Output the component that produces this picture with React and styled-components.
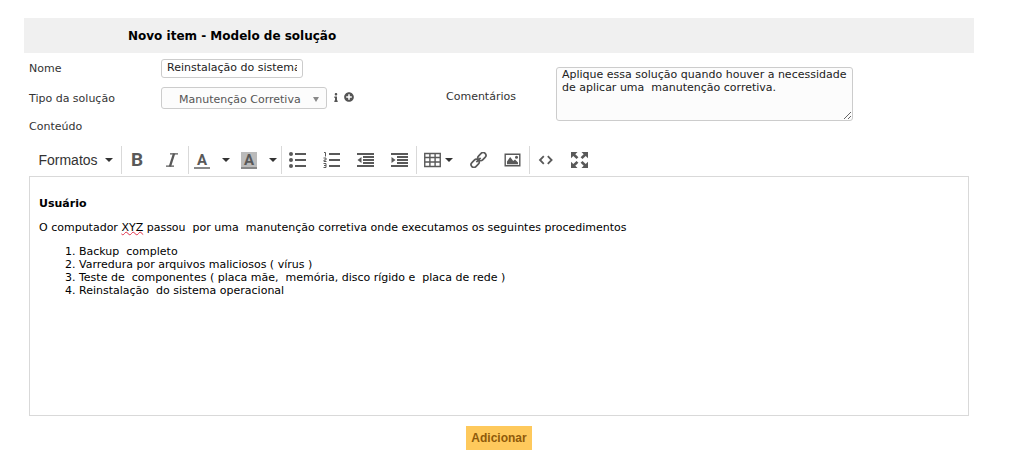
import React from "react";
import styled, { createGlobalStyle } from "styled-components";
import { FaInfo, FaPlusCircle } from "react-icons/fa";

const GlobalStyle = createGlobalStyle`
  *, *::before, *::after { box-sizing: border-box; }
  body {
    margin: 0;
    background: #fff;
    color: #222;
    font: 11px/13px "DejaVu Sans", Verdana, sans-serif;
  }
`;

const Page = styled.form`
  padding: 18px 43px 12px 24px;
`;

const Header = styled.h1`
  margin: 0;
  padding: 1px 104px 0;
  background: #f0f0f0;
  color: #000;
  font-size: 12px;
  line-height: 34px;
`;

const Fields = styled.div`
  display: grid;
  grid-template-columns: 132px 285px 110px 1fr;
  grid-template-rows: 30px 30px 26px;
  align-items: center;
  padding: 0 5px;
`;

const Label = styled.label`
  grid-column: 1;
  color: #333;
`;

const CommentLabel = styled(Label)`
  grid-column: 3;
  grid-row: 1 / span 3;
`;

const Control = styled.div`
  grid-column: 2;
  display: flex;
  align-items: center;
  gap: 4px;
`;

const TextInput = styled.input`
  width: 142px;
  height: 19px;
  padding: 0 5px 2px;
  border: 1px solid #ccc;
  border-radius: 3px;
  background: #fff;
  color: #222;
  font: inherit;
`;

const SelectBox = styled.div`
  position: relative;
  width: 166px;
  margin-right: 2px;

  svg {
    position: absolute;
    right: 8px;
    top: 10px;
    pointer-events: none;
  }
`;

const Select = styled.select`
  display: block;
  appearance: none;
  width: 100%;
  height: 22px;
  padding: 2px 17px 0;
  border: 1px solid #ccc;
  border-radius: 3px;
  background: #fcfcfc;
  color: #555;
  font: inherit;
`;

const IconButton = styled.button`
  display: flex;
  justify-content: center;
  width: ${(p) => p.$width}px;
  padding: 0 0 2px;
  border: 0;
  background: none;
  color: #555;
`;

const Comments = styled.textarea`
  grid-column: 4;
  grid-row: 1 / span 3;
  align-self: start;
  width: 297px;
  height: 54px;
  margin: 14px 0 0;
  padding: 0 5px;
  border: 1px solid #ccc;
  border-radius: 3px;
  background: #fcfcfc;
  color: #222;
  font: inherit;
  overflow: hidden;
`;

const Editor = styled.section`
  padding: 7px 5px 0;
`;

const Toolbar = styled.div`
  display: flex;
  height: 30px;
`;

const Group = styled.div`
  display: flex;
  height: 28px;
  margin-right: -1px;
  border-left: 1px solid ${(p) => (p.$first ? "transparent" : "#d9d9d9")};

  & > :first-child { margin-left: -1px; }
`;

const Tool = styled.button`
  display: flex;
  align-items: center;
  justify-content: center;
  gap: ${(p) => p.$gap || 0}px;
  width: ${(p) => p.$width || 34}px;
  padding: 0 2px 0 0;
  border: 0;
  background: none;
  color: #595959;
  font: 14px/20px "Liberation Sans", Arial, sans-serif;
`;

const FormatTool = styled(Tool)`
  padding: 0;
  color: #333;
`;

const BoldMark = styled.span`
  font: bold 19px/20px Roboto, sans-serif;
`;

const ColorMark = styled.span`
  width: 16px;
  height: 17px;
  border-bottom: 2px solid #888;
  background: ${(p) => (p.$filled ? "#bbb" : "transparent")};
  font: bold 15px/17px Roboto, sans-serif;
  text-align: center;
`;

const Content = styled.div`
  height: 240px;
  padding: 9px;
  border: 1px solid #d9d9d9;
  color: #000;
  white-space: pre-wrap;
  overflow: auto;

  p { margin: 11px 0; }
  ol { margin: 11px 0; padding-left: 40px; }
`;

const Misspelled = styled.span`
  text-decoration: underline wavy #e0304a 1px;
  text-underline-offset: 0;
  text-decoration-skip-ink: none;
`;

const Footer = styled.footer`
  display: flex;
  justify-content: center;
  padding-top: 10px;
`;

const Submit = styled.button`
  height: 24px;
  padding: 0 5px;
  border: 0;
  background: #fec95c;
  color: #8f5a0a;
  font: bold 12px/24px "Liberation Sans", Arial, sans-serif;
`;

const Caret = () => (
  <svg width="8" height="4" viewBox="0 0 8 4" fill="#333" aria-hidden="true">
    <path d="M0 0h8L4 4z" />
  </svg>
);

const Icon = ({ children }) => (
  <svg width="17" height="16" viewBox="0 0 17 16" fill="currentColor" aria-hidden="true">
    {children}
  </svg>
);

const ItalicIcon = () => (
  <Icon>
    <path d="M7 1.8h8M3 14.2h8" stroke="currentColor" strokeWidth="1.3" />
    <path d="M11.1 1.5L6.9 14.5" stroke="currentColor" strokeWidth="2.4" />
  </Icon>
);

const BulletsIcon = () => (
  <Icon>
    <circle cx="2" cy="2" r="2" />
    <circle cx="2" cy="8" r="2" />
    <circle cx="2" cy="14" r="2" />
    <path d="M6 1h11v2H6zM6 7h11v2H6zM6 13h11v2H6z" />
  </Icon>
);

const NumbersIcon = () => (
  <Icon>
    <path d="M6 1h11v2H6zM6 7h11v2H6zM6 13h11v2H6z" />
    <path
      d="M1 .5h1.5V4.5M.5 6h2.5v2H1v1.5h2.5M.5 11.5h2.5v4H.5M1 13.5h2"
      fill="none"
      stroke="currentColor"
    />
  </Icon>
);

const IndentIcon = ({ arrow }) => (
  <Icon>
    <path d="M0 1h17v2H0zM6 4h11v2H6zM6 7h11v2H6zM6 10h11v2H6zM0 13h17v2H0z" />
    <path d={arrow} />
  </Icon>
);

const TableIcon = () => (
  <Icon>
    <path
      d="M.75 1.5h15.5v13H.75zM.75 5.5h15.5M.75 10h15.5M5.9 1.5v13M11.1 1.5v13"
      fill="none"
      stroke="currentColor"
      strokeWidth="1.4"
    />
  </Icon>
);

const LinkIcon = () => (
  <Icon>
    <g fill="none" stroke="currentColor" strokeWidth="1.7" transform="rotate(-45 8.5 8)">
      <rect x="-.8" y="5.2" width="9" height="5.6" rx="2.8" />
      <rect x="8.8" y="5.2" width="9" height="5.6" rx="2.8" />
      <path d="M5.5 8h6" />
    </g>
  </Icon>
);

const ImageIcon = () => (
  <Icon>
    <path d="M1.2 2.2h14.6v11.6H1.2z" fill="none" stroke="currentColor" strokeWidth="1.4" />
    <path d="M3 12.2V9.5L6.2 5l3 4 1.8-1.6 3 3v1.8z" />
    <circle cx="12.5" cy="5.2" r="1.5" />
  </Icon>
);

const CodeIcon = () => (
  <Icon>
    <path d="M6.8 4.2L3 8l3.8 3.8M10.8 4.2L14.6 8l-3.8 3.8" fill="none" stroke="currentColor" strokeWidth="1.8" />
  </Icon>
);

const FullscreenIcon = () => (
  <Icon>
    <path d="M0 0h6.5L4.3 2.2 7.4 5.3 5.5 7.1 2.3 4 0 6.3zM17 0h-6.5l2.2 2.2-3.1 3.1 1.9 1.8L14.7 4 17 6.3zM0 16h6.5l-2.2-2.2 3.1-3.1-1.9-1.8L2.3 12 0 9.7zM17 16h-6.5l2.2-2.2-3.1-3.1 1.9-1.8 3.2 3.1L17 9.7z" />
  </Icon>
);

const ToolbarButton = ({ label, ...rest }) => (
  <Tool type="button" aria-label={label} {...rest} />
);

export default function App() {
  return (
    <>
      <GlobalStyle />
      <Page onSubmit={(e) => e.preventDefault()}>
        <Header>Novo item - Modelo de solução</Header>

        <Fields>
          <Label htmlFor="name">Nome</Label>
          <Control>
            <TextInput id="name" defaultValue="Reinstalação do sistema operacional" />
          </Control>

          <Label htmlFor="type">Tipo da solução</Label>
          <Control>
            <SelectBox>
              <Select id="type">
                <option>Manutenção Corretiva</option>
              </Select>
              <svg width="6" height="5" viewBox="0 0 6 5" fill="#888" aria-hidden="true">
                <path d="M0 0h6L3 5z" />
              </svg>
            </SelectBox>
            <IconButton type="button" aria-label="Informações" $width={6}>
              <FaInfo size={9} />
            </IconButton>
            <IconButton type="button" aria-label="Adicionar tipo" $width={12}>
              <FaPlusCircle size={10} />
            </IconButton>
          </Control>

          <Label as="span" id="content-label">Conteúdo</Label>

          <CommentLabel htmlFor="comments">Comentários</CommentLabel>
          <Comments
            id="comments"
            defaultValue={"Aplique essa solução quando houver a necessidade de aplicar uma  manutenção corretiva."}
          />
        </Fields>

        <Editor>
          <Toolbar role="toolbar">
            <Group $first>
              <FormatTool type="button" $width={93} $gap={7}>
                Formatos
                <Caret />
              </FormatTool>
            </Group>
            <Group>
              <ToolbarButton label="Negrito"><BoldMark>B</BoldMark></ToolbarButton>
              <ToolbarButton label="Itálico"><ItalicIcon /></ToolbarButton>
            </Group>
            <Group>
              <ToolbarButton label="Cor do texto" $width={30}><ColorMark>A</ColorMark></ToolbarButton>
              <ToolbarButton label="Escolher cor do texto" $width={17}><Caret /></ToolbarButton>
              <ToolbarButton label="Cor do fundo" $width={30}><ColorMark $filled>A</ColorMark></ToolbarButton>
              <ToolbarButton label="Escolher cor do fundo" $width={17}><Caret /></ToolbarButton>
            </Group>
            <Group>
              <ToolbarButton label="Lista não ordenada"><BulletsIcon /></ToolbarButton>
              <ToolbarButton label="Lista ordenada"><NumbersIcon /></ToolbarButton>
              <ToolbarButton label="Diminuir recuo"><IndentIcon arrow="M4.5 5v6L.5 8z" /></ToolbarButton>
              <ToolbarButton label="Aumentar recuo"><IndentIcon arrow="M.5 5v6l4-3z" /></ToolbarButton>
            </Group>
            <Group>
              <ToolbarButton label="Tabela" $width={46} $gap={4}><TableIcon /><Caret /></ToolbarButton>
              <ToolbarButton label="Link"><LinkIcon /></ToolbarButton>
              <ToolbarButton label="Imagem"><ImageIcon /></ToolbarButton>
            </Group>
            <Group>
              <ToolbarButton label="Código fonte"><CodeIcon /></ToolbarButton>
              <ToolbarButton label="Tela cheia"><FullscreenIcon /></ToolbarButton>
            </Group>
          </Toolbar>

          <Content
            role="textbox"
            aria-multiline="true"
            aria-labelledby="content-label"
            contentEditable
            suppressContentEditableWarning
            spellCheck={false}
          >
            <p><strong>Usuário</strong></p>
            <p>
              O computador <Misspelled>XYZ</Misspelled>
              {" passou  por uma  manutenção corretiva onde executamos os seguintes procedimentos"}
            </p>
            <ol>
              <li>{"Backup  completo"}</li>
              <li>{"Varredura por arquivos maliciosos ( vírus )"}</li>
              <li>{"Teste de  componentes ( placa mãe,  memória, disco rígido e  placa de rede )"}</li>
              <li>{"Reinstalação  do sistema operacional"}</li>
            </ol>
          </Content>
        </Editor>

        <Footer>
          <Submit type="submit">Adicionar</Submit>
        </Footer>
      </Page>
    </>
  );
}
